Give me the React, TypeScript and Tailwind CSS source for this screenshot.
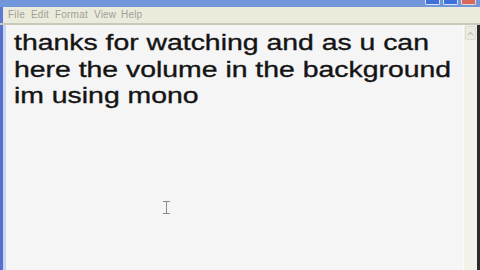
import { ChevronUp } from 'lucide-react';

const menuItems = [
  { label: 'File', x: 'w-[23px]' },
  { label: 'Edit', x: 'w-[24px]' },
  { label: 'Format', x: 'w-[39px]' },
  { label: 'View', x: 'w-[27px]' },
  { label: 'Help', x: 'w-[24px]' },
];

const lines = ['thanks for watching and as u can', 'here the volume in the background', 'im using mono'];

export default function App() {
  return (
    <div className="w-[480px] h-[270px] overflow-hidden flex flex-col bg-[#f5f5f5] font-['Liberation_Sans',Arial,sans-serif]">
      {/* title bar, mostly cut off */}
      <div className="h-[7px] shrink-0 bg-[#7196dc] flex items-start justify-end pr-[4px] gap-[3px]">
        <div className="w-[15px] h-[5px] bg-[#3f6fd8] border border-[#d8e4fa] border-t-0 rounded-b-[2px]" />
        <div className="w-[15px] h-[5px] bg-[#3f6fd8] border border-[#d8e4fa] border-t-0 rounded-b-[2px]" />
        <div className="w-[15px] h-[5px] bg-[#d9695a] border border-[#f2d6d0] border-t-0 rounded-b-[2px]" />
      </div>
      {/* menu bar */}
      <div className="h-[16px] shrink-0 bg-[#ebebdb] flex items-center pl-[5px] border-l-[3px] border-[#5a78d4]">
        {menuItems.map((m) => (
          <div key={m.label} className={`${m.x} text-[10px] leading-none text-[#a09f98] tracking-[0.2px]`}>
            {m.label}
          </div>
        ))}
      </div>
      <div className="h-[2px] shrink-0 bg-[#c9c8bd]" />
      {/* body */}
      <div className="flex-1 flex min-h-0">
        <div className="w-[3px] bg-[#5670cc]" />
        <div className="w-[3px] bg-[#c8d6f2]" />
        <div className="flex-1 relative bg-[#f5f5f5] pl-[8px] pt-[5px]">
          {lines.map((l) => (
            <div
              key={l}
              className="text-[22px] leading-[26.5px] text-[#141414] whitespace-nowrap origin-left scale-x-[1.29] [-webkit-text-stroke:0.35px_#141414]"
            >
              {l}
            </div>
          ))}
          <div className="absolute left-[157px] top-[176px] w-[7px] h-[13px] flex flex-col items-center">
            <div className="w-[7px] h-[1px] bg-[#8a8a8a]" />
            <div className="w-[1px] flex-1 bg-[#8a8a8a]" />
            <div className="w-[7px] h-[1px] bg-[#8a8a8a]" />
          </div>
        </div>
        {/* scrollbar */}
        <div className="w-[14px] flex flex-col bg-[#f0efe6] border-l border-[#fbfbf7]">
          <div className="h-[14px] mt-[1px] mx-[1px] rounded-[2px] bg-[#ecebe3] border border-[#dddcd2] flex items-center justify-center">
            <ChevronUp className="w-[9px] h-[9px] text-[#c2c1b8]" strokeWidth={3} />
          </div>
          <div className="flex-1 bg-[#f3f2ea]" />
        </div>
        <div className="w-[3px] bg-[#2b2b2b]" />
      </div>
    </div>
  );
}
